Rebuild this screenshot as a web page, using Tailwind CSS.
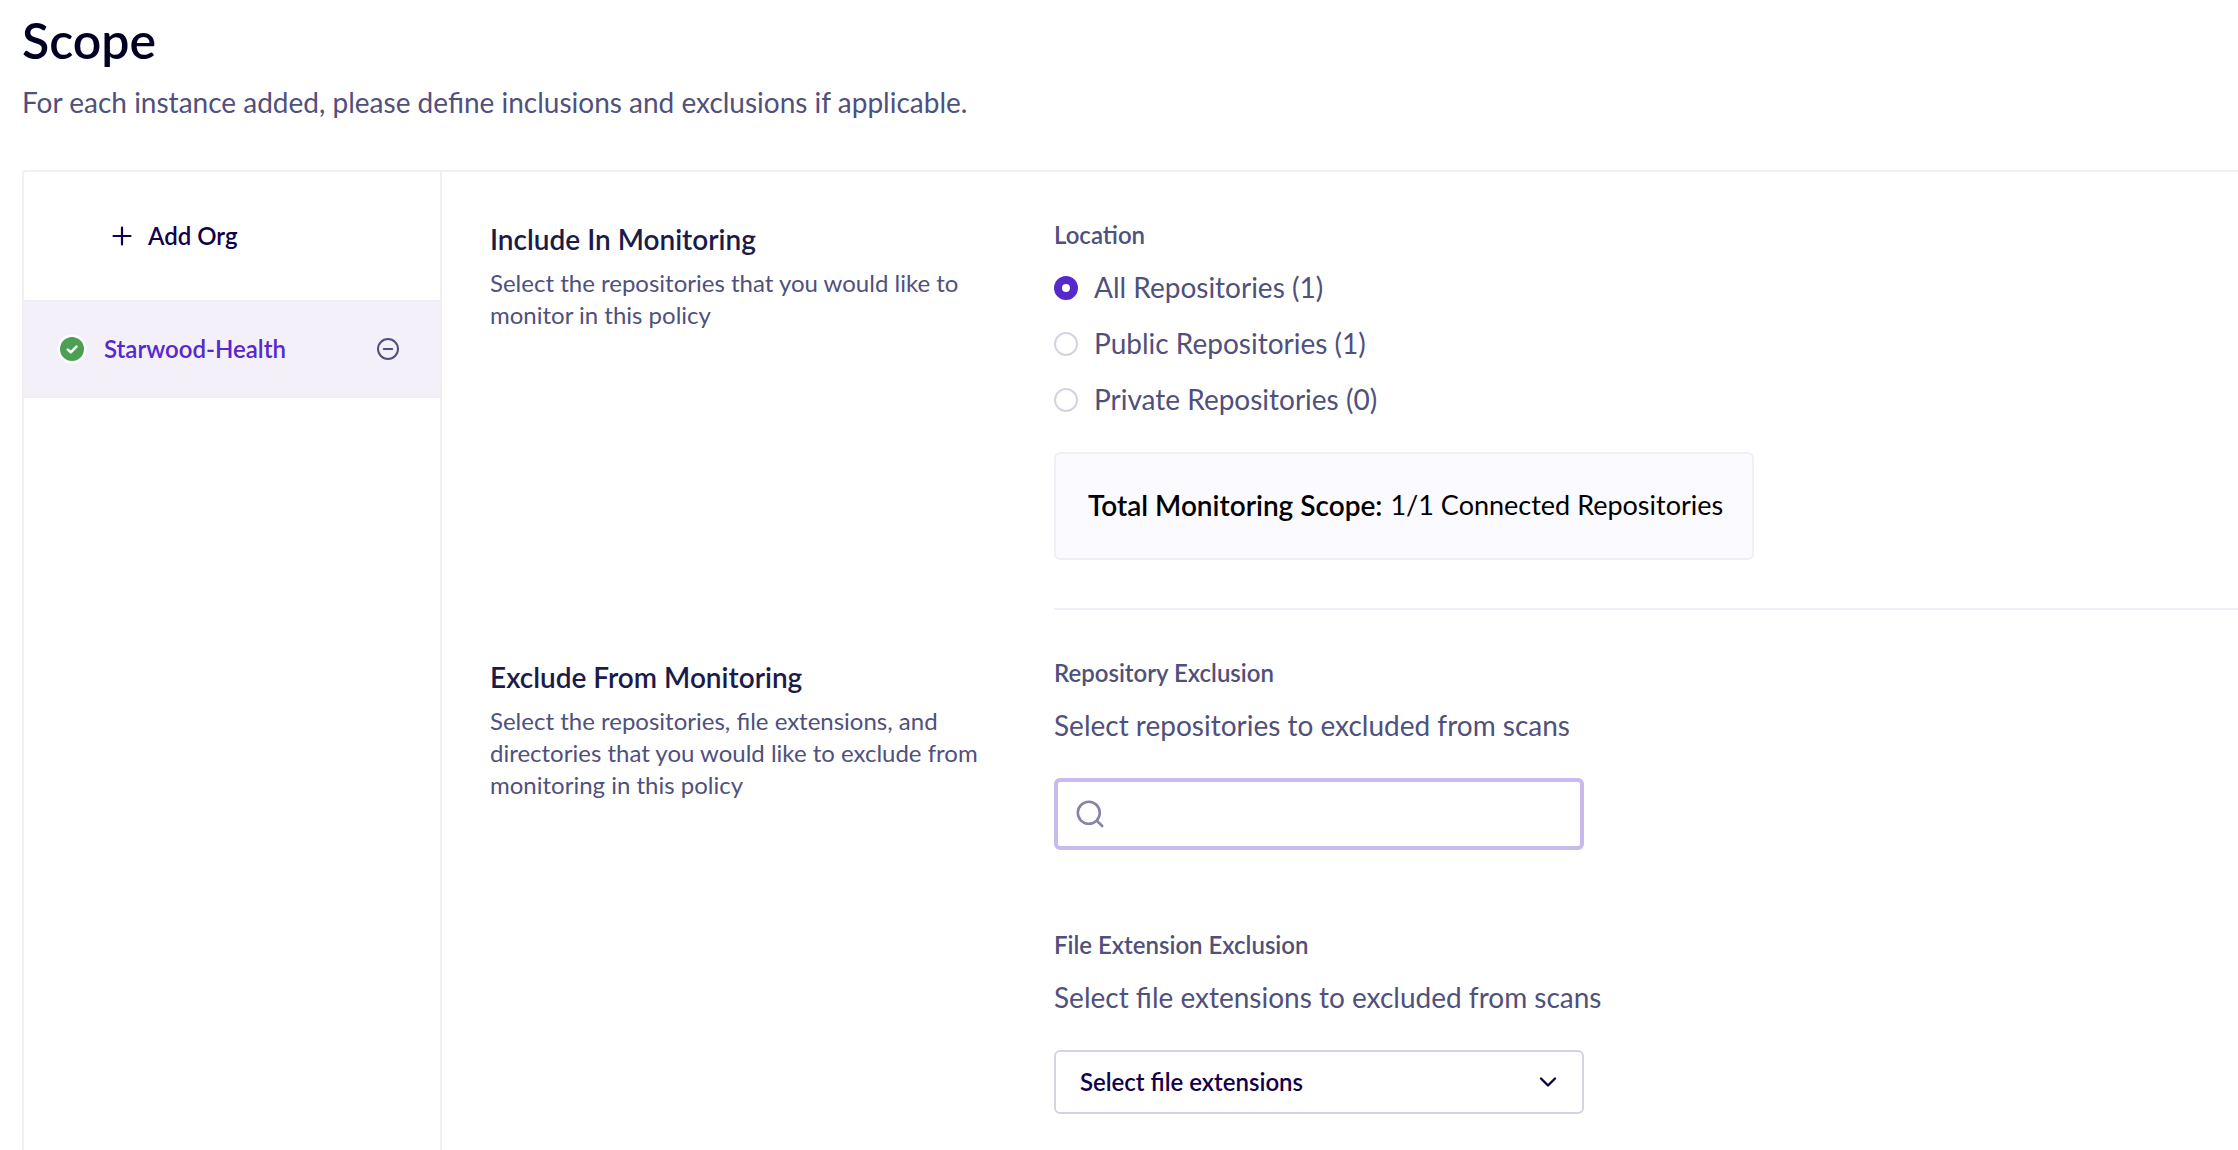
<!DOCTYPE html>
<html lang="en">
<head>
<meta charset="utf-8">
<meta name="viewport" content="width=device-width, initial-scale=1">
<title>Scope</title>
<script src="https://cdn.jsdelivr.net/npm/@tailwindcss/browser@4"></script>
</head>
<body class="flex min-h-screen flex-col bg-white pl-[22px] pt-3 font-['Lato',sans-serif] text-[#50507d]">
  <header class="flex flex-col gap-[14px] pb-12">
    <h1 class="text-[50px] leading-14 font-semibold text-[#000022]">Scope</h1>
    <p class="text-[28px] leading-10">For each instance added, please define inclusions and exclusions if applicable.</p>
  </header>

  <main class="flex grow rounded-tl border-t-2 border-l-2 border-[#f0eff5]">
    <!-- Organisations -->
    <aside class="w-[418px] shrink-0 border-r-2 border-[#f0eff5]">
      <button type="button" class="flex h-32 w-full items-center gap-[14px] pl-[86px] text-2xl leading-8 font-semibold text-[#12004a]">
        <svg class="size-6" viewBox="0 0 24 24" fill="none" stroke="currentColor" stroke-width="2.2" stroke-linecap="round" aria-hidden="true"><path d="M12 3.5v17M3.5 12h17"/></svg>
        Add Org
      </button>
      <div class="flex h-[98px] items-center border-y-2 border-[#efecf6] bg-[#f4f0fa] pr-10 pl-[33px]">
        <svg class="size-[30px] shrink-0" viewBox="0 0 30 30" fill="none" aria-hidden="true">
          <circle cx="15" cy="15" r="14.5" fill="#fff"/><circle cx="15" cy="15" r="12" fill="#4ca054"/>
          <path d="M10.8 15.6l3 2.7 5.6-5.6" stroke="#fff" stroke-width="2.6" stroke-linecap="round" stroke-linejoin="round"/>
        </svg>
        <a href="#" class="grow pl-[17px] text-2xl leading-8 font-semibold text-[#5529cc]">Starwood-Health</a>
        <button type="button" aria-label="Remove Starwood-Health">
          <svg class="size-6" viewBox="0 0 24 24" fill="none" stroke="#50507d" stroke-width="2" stroke-linecap="round" aria-hidden="true"><circle cx="12" cy="12" r="10"/><path d="M7.8 12h8.4"/></svg>
        </button>
      </div>
    </aside>

    <div class="grow pl-12">
      <!-- Include -->
      <section class="flex">
        <div class="w-[564px] shrink-0 pt-[51px] pr-16">
          <h2 class="text-[28px] leading-8 font-semibold text-[#1b1b4b]">Include In Monitoring</h2>
          <p class="pt-3 text-2xl leading-8">Select the repositories that you would like to monitor in this policy</p>
        </div>
        <div class="grow border-b-2 border-[#f0eff5] pt-[47px] pb-12">
          <fieldset>
            <legend class="text-2xl leading-8 font-semibold">Location</legend>
            <div class="flex flex-col gap-6 pt-[21px] text-[28px] leading-[30px]">
              <label class="flex items-center gap-4">
                <input type="radio" name="location" checked class="size-6 shrink-0 appearance-none rounded-full border-2 border-[#d5d2e1] checked:border-8 checked:border-[#5529cc]">
                <span class="pb-0.5">All Repositories (1)</span>
              </label>
              <label class="flex items-center gap-4">
                <input type="radio" name="location" class="size-6 shrink-0 appearance-none rounded-full border-2 border-[#d5d2e1] checked:border-8 checked:border-[#5529cc]">
                <span class="pb-0.5">Public Repositories (1)</span>
              </label>
              <label class="flex items-center gap-4">
                <input type="radio" name="location" class="size-6 shrink-0 appearance-none rounded-full border-2 border-[#d5d2e1] checked:border-8 checked:border-[#5529cc]">
                <span class="pb-0.5">Private Repositories (0)</span>
              </label>
            </div>
          </fieldset>
          <div class="mt-9 flex h-[108px] w-[700px] items-center gap-2 rounded-md border-2 border-[#f0eff5] bg-[#fbfaff] pb-0.5 pl-8 leading-8 text-black">
            <strong class="text-[28px] font-semibold">Total Monitoring Scope:</strong>
            <span class="text-[27px]">1/1 Connected Repositories</span>
          </div>
        </div>
      </section>

      <!-- Exclude -->
      <section class="flex">
        <div class="w-[564px] shrink-0 pt-[51px] pr-16">
          <h2 class="text-[28px] leading-8 font-semibold text-[#1b1b4b]">Exclude From Monitoring</h2>
          <p class="pt-3 text-2xl leading-8">Select the repositories, file extensions, and directories that you would like to exclude from monitoring in this policy</p>
        </div>
        <div class="grow pt-[47px] pb-9">
          <label for="repos" class="block text-2xl leading-8 font-semibold">Repository Exclusion</label>
          <p class="pt-5 text-[28px] leading-8">Select repositories to excluded from scans</p>
          <div class="relative mt-[37px] w-[530px]">
            <svg class="absolute top-5 left-5 size-8" viewBox="0 0 32 32" fill="none" stroke="#8583a6" stroke-width="2.6" stroke-linecap="round" aria-hidden="true"><circle cx="14.8" cy="14.8" r="11"/><path d="M22.8 22.8l5.4 5.2"/></svg>
            <input id="repos" type="text" class="h-[72px] w-full rounded-md border-4 border-[#c8b9ee] pr-4 pl-14 text-2xl outline-none">
          </div>

          <label for="extensions" class="block pt-[79px] text-2xl leading-8 font-semibold">File Extension Exclusion</label>
          <p class="pt-5 text-[28px] leading-8">Select file extensions to excluded from scans</p>
          <div class="relative mt-[37px] w-[530px]">
            <select id="extensions" class="h-16 w-full appearance-none rounded-md border-2 border-[#d5d2e1] bg-white pr-16 pl-6 text-2xl font-semibold text-[#12004a]">
              <option>Select file extensions</option>
            </select>
            <svg class="pointer-events-none absolute top-5 right-6 size-6" viewBox="0 0 24 24" fill="none" stroke="#12004a" stroke-width="2.4" stroke-linecap="round" stroke-linejoin="round" aria-hidden="true"><path d="M5 8.5l7 7 7-7"/></svg>
          </div>
        </div>
      </section>
    </div>
  </main>
</body>
</html>
